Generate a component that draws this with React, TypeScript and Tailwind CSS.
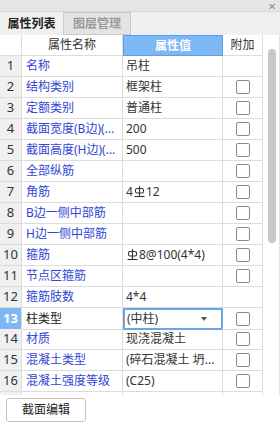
import React from 'react';

type Row = {
  name: string
  value?: React.ReactNode
  check?: boolean
  selected?: boolean
}

const Rebar = () => (
  <svg width="11" height="12" viewBox="0 0 11 12" className="inline-block align-[-1px] mx-[1px]">
    <rect x="1.5" y="2.5" width="8" height="4.5" rx="1.5" fill="none" stroke="#333" strokeWidth="1.1" />
    <line x1="5.5" y1="0" x2="5.5" y2="10" stroke="#333" strokeWidth="1.1" />
    <line x1="0.5" y1="10.5" x2="10.5" y2="10.5" stroke="#333" strokeWidth="1.1" />
  </svg>
)

const rows: Row[] = [
  { name: '名称', value: '吊柱', check: false },
  { name: '结构类别', value: '框架柱', check: true },
  { name: '定额类别', value: '普通柱', check: true },
  { name: '截面宽度(B边)(...', value: '200', check: true },
  { name: '截面高度(H边)(...', value: '500', check: true },
  { name: '全部纵筋', value: '', check: true },
  { name: '角筋', value: <>4<Rebar />12</>, check: true },
  { name: 'B边一侧中部筋', value: '', check: true },
  { name: 'H边一侧中部筋', value: '', check: true },
  { name: '箍筋', value: <><Rebar />8@100(4*4)</>, check: true },
  { name: '节点区箍筋', value: '', check: true },
  { name: '箍筋肢数', value: '4*4', check: false },
  { name: '柱类型', value: '(中柱)', check: true, selected: true },
  { name: '材质', value: '现浇混凝土', check: true },
  { name: '混凝土类型', value: '(碎石混凝土 坍...', check: true },
  { name: '混凝土强度等级', value: '(C25)', check: true },
]

function Checkbox() {
  return <div className="w-[14px] h-[14px] border border-[#8a8a8a] rounded-[2px] bg-white" />
}

export default function App() {
  return (
    <div className="w-[280px] h-[425px] bg-white overflow-hidden text-[12px] text-[#333]" style={{ fontFamily: '"Noto Sans", "Noto Sans CJK SC", sans-serif' }}>
      {/* title strip */}
      <div className="h-[12px] bg-[#e6e6e6] border-b border-[#d6d6d6] flex justify-end items-center pr-[4px]">
        <span className="text-[10px] leading-none text-[#8a8a8a]">✕</span>
      </div>

      {/* tabs */}
      <div className="h-[23px] bg-[#f0f0f0] flex items-stretch">
        <div className="w-[64px] flex items-center justify-center font-bold text-[#222] border-r border-[#cfcfcf]">属性列表</div>
        <div className="w-[67px] flex items-center justify-center font-bold text-[#9a9a9a] bg-[#e4e4e4] border border-l-0 border-[#c9c9c9]">图层管理</div>
      </div>

      {/* grid */}
      <div className="flex h-[360px] overflow-hidden">
        <div className="w-[263px]">
          <div className="grid grid-cols-[22px_101px_100px_40px] h-[21px]">
            <div className="border-r border-b border-[#dcdcdc] bg-white" />
            <div className="border-r border-b border-[#dcdcdc] flex items-center justify-center">属性名称</div>
            <div className="border border-[#5b9fe6] bg-[#7db8f5] text-white font-bold flex items-center justify-center">属性值</div>
            <div className="border-r border-b border-[#dcdcdc] flex items-center justify-center">附加</div>
          </div>
          {rows.map((r, i) => (
            <div key={i} className="grid grid-cols-[22px_101px_100px_40px] h-[21px]">
              <div className={`border-r border-b border-[#dcdcdc] flex items-center justify-center text-[13px] ${r.selected ? 'bg-[#7db8f5] text-white font-bold' : 'bg-[#f0f0f0]'}`}>
                {i + 1}
              </div>
              <div className={`border-r border-b border-[#dcdcdc] flex items-center pl-[4px] whitespace-nowrap overflow-hidden ${r.selected ? 'text-[#222]' : 'text-[#2f46d6]'}`}>
                {r.name}
              </div>
              {r.selected ? (
                <div className="border-2 border-[#6aa6e6] flex items-center justify-between pl-[2px] pr-[14px] whitespace-nowrap">
                  <span>{r.value}</span>
                  <svg width="6" height="4" viewBox="0 0 6 4"><path d="M0 0 L6 0 L3 4 Z" fill="#555" /></svg>
                </div>
              ) : (
                <div className="border-r border-b border-[#dcdcdc] flex items-center pl-[3px] whitespace-nowrap overflow-hidden">
                  {r.value}
                </div>
              )}
              <div className="border-r border-b border-[#dcdcdc] flex items-center justify-center">
                {r.check && <Checkbox />}
              </div>
            </div>
          ))}
          <div className="grid grid-cols-[22px_101px_100px_40px] h-[21px]">
            <div className="border-r border-[#dcdcdc] bg-[#f0f0f0]" />
            <div className="border-r border-[#dcdcdc]" />
            <div className="border-r border-[#dcdcdc]" />
            <div className="border-r border-[#dcdcdc]" />
          </div>
        </div>
        {/* scrollbar */}
        <div className="flex-1 pt-[14px] pl-[5px] border-r border-[#e2e2e2]">
          <div className="w-[8px] h-[194px] rounded-full bg-[#c8c8c8]" />
        </div>
      </div>

      <div className="pt-[3px] pl-[6px]">
        <button className="w-[80px] h-[24px] border border-[#c4c4c4] rounded-[3px] bg-white text-[12px] text-[#222] flex items-center justify-center">
          截面编辑
        </button>
      </div>
    </div>
  );
}
